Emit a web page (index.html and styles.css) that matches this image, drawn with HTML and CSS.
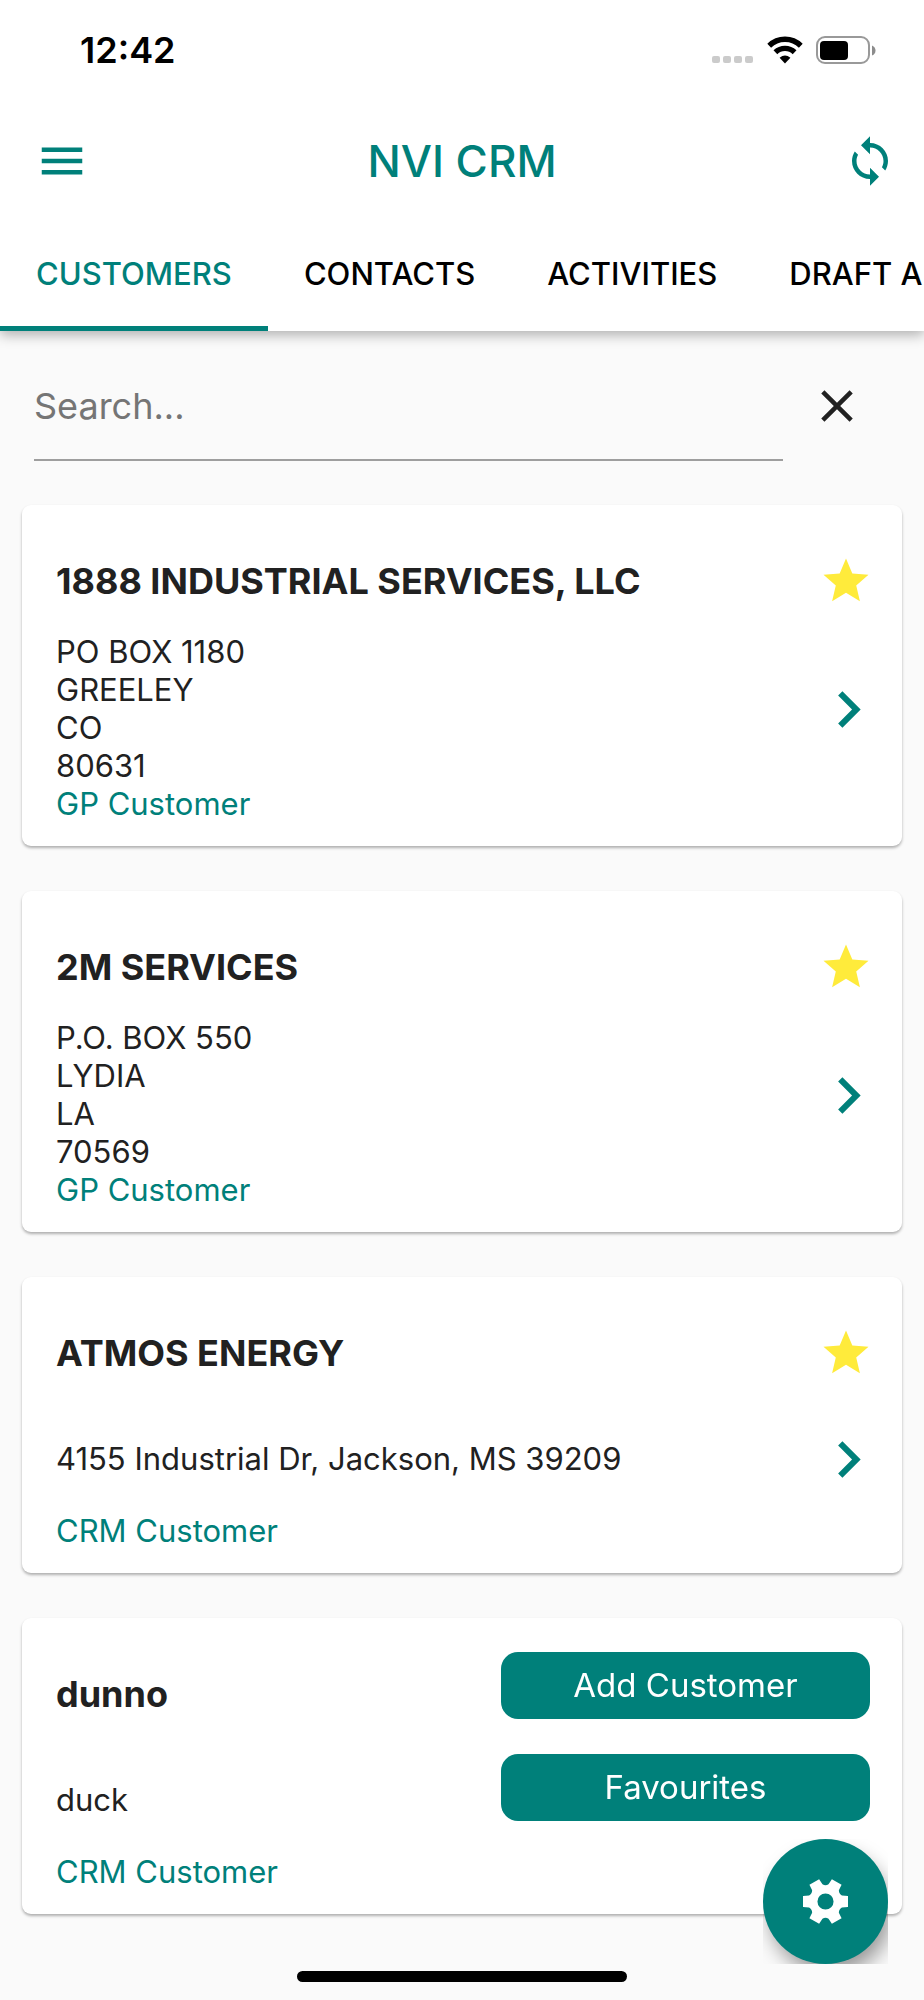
FILE: index.html
```html
<!DOCTYPE html>
<html lang="en">
<head>
<meta charset="utf-8">
<meta name="viewport" content="width=device-width, initial-scale=1">
<title>NVI CRM</title>
<link rel="stylesheet" href="styles.css">
</head>
<body>
<svg class="sprite" aria-hidden="true">
  <symbol id="star" viewBox="0 0 24 24"><path d="M12 17.27L18.18 21l-1.64-7.03L22 9.24l-7.19-.61L12 2 9.19 8.63 2 9.24l5.46 4.73L5.82 21z"/></symbol>
  <symbol id="chevron" viewBox="0 0 24 24"><path d="M10 6L8.59 7.41 13.17 12l-4.58 4.59L10 18l6-6z"/></symbol>
</svg>

<header class="header">
  <div class="status">
    <span class="status-time">12:42</span>
    <div class="status-icons">
      <svg class="signal" width="42" height="28" viewBox="0 0 42 28" aria-hidden="true">
        <rect x="0" y="20" width="8" height="7" rx="2"/><rect x="11" y="20" width="8" height="7" rx="2"/><rect x="22" y="20" width="8" height="7" rx="2"/><rect x="33" y="20" width="8" height="7" rx="2"/>
      </svg>
      <svg width="36" height="28" viewBox="0 0 36 28" aria-hidden="true">
        <g fill="none" stroke="#000" stroke-width="5.4">
          <path d="M2.2 9.700A22.600 22.600 0 0 1 33.800 9.700"/>
          <path d="M8.400 16.300A13.800 13.800 0 0 1 27.600 16.300"/>
        </g>
        <path d="M18 27.400L12.600 21.800Q18 17 23.400 21.800Z"/>
      </svg>
      <svg width="60" height="28" viewBox="0 0 60 28" aria-hidden="true">
        <rect x="1" y="1" width="52" height="26" rx="8" fill="none" stroke="#999" stroke-width="2"/>
        <rect x="4" y="5" width="28" height="19" rx="4"/>
        <path d="M56 9.500q3.500 1.500 3.500 5t-3.500 5z" fill="#8c8c8c"/>
      </svg>
    </div>
  </div>

  <div class="appbar">
    <button class="icon-button menu" type="button" aria-label="Menu">
      <svg class="icon" viewBox="0 0 24 24"><path d="M3 18h18v-2H3v2zm0-5h18v-2H3v2zm0-7v2h18V6H3z"/></svg>
    </button>
    <h1 class="title">NVI CRM</h1>
    <button class="icon-button sync" type="button" aria-label="Sync">
      <svg class="icon" viewBox="0 0 24 24"><path d="M12 4V1L8 5l4 4V6c3.310 0 6 2.690 6 6 0 1.010-.25 1.970-.7 2.800l1.460 1.460C19.540 15.030 20 13.570 20 12c0-4.420-3.580-8-8-8zm0 14c-3.310 0-6-2.690-6-6 0-1.010.25-1.970.7-2.800L5.240 7.740C4.460 8.970 4 10.430 4 12c0 4.420 3.580 8 8 8v3l4-4-4-4v3z"/></svg>
    </button>
  </div>

  <nav class="tabs">
    <a class="tab tab-active" href="#customers" aria-current="page">CUSTOMERS</a>
    <a class="tab" href="#contacts">CONTACTS</a>
    <a class="tab" href="#activities">ACTIVITIES</a>
    <a class="tab" href="#drafts">DRAFT A</a>
  </nav>
</header>

<main class="content">
  <form class="search">
    <input class="search-input" type="text" placeholder="Search..." aria-label="Search">
    <button class="icon-button search-clear" type="reset" aria-label="Clear search">
      <svg class="icon" viewBox="0 0 24 24"><path d="M19 6.410L17.590 5 12 10.590 6.410 5 5 6.410 10.590 12 5 17.590 6.410 19 12 13.410 17.590 19 19 17.590 13.410 12z"/></svg>
    </button>
  </form>

  <article class="card">
    <div class="card-head">
      <h2 class="card-title">1888 INDUSTRIAL SERVICES, LLC</h2>
      <button class="icon-button star" type="button" aria-label="Favourite"><svg class="icon"><use href="#star"/></svg></button>
    </div>
    <div class="card-row">
      <address class="address">PO BOX 1180<br>GREELEY<br>CO<br>80631</address>
      <a class="open" href="#customer-1" aria-label="Open customer"><svg class="chevron"><use href="#chevron"/></svg></a>
    </div>
    <p class="kind">GP Customer</p>
  </article>

  <article class="card">
    <div class="card-head">
      <h2 class="card-title">2M SERVICES</h2>
      <button class="icon-button star" type="button" aria-label="Favourite"><svg class="icon"><use href="#star"/></svg></button>
    </div>
    <div class="card-row">
      <address class="address">P.O. BOX 550<br>LYDIA<br>LA<br>70569</address>
      <a class="open" href="#customer-2" aria-label="Open customer"><svg class="chevron"><use href="#chevron"/></svg></a>
    </div>
    <p class="kind">GP Customer</p>
  </article>

  <article class="card">
    <div class="card-head">
      <h2 class="card-title">ATMOS ENERGY</h2>
      <button class="icon-button star" type="button" aria-label="Favourite"><svg class="icon"><use href="#star"/></svg></button>
    </div>
    <div class="card-row card-row-spaced">
      <address class="address">4155 Industrial Dr, Jackson, MS 39209</address>
      <a class="open" href="#customer-3" aria-label="Open customer"><svg class="chevron"><use href="#chevron"/></svg></a>
    </div>
    <p class="kind">CRM Customer</p>
  </article>

  <article class="card">
    <div class="card-head">
      <h2 class="card-title">dunno</h2>
    </div>
    <div class="card-row card-row-spaced">
      <address class="address">duck</address>
    </div>
    <p class="kind">CRM Customer</p>
  </article>
</main>

<div class="actions">
  <button class="action" type="button">Add Customer</button>
  <button class="action" type="button">Favourites</button>
  <div class="fab-box">
    <button class="fab" type="button" aria-label="Settings">
      <svg class="gear" viewBox="-70 -70 140 140"><path fill-rule="evenodd" d="M48.900-17.800L67-16.700V16.700L48.900 17.800Q39.800 23 39.800 33.400L47.900 49.600 19 66.300 9 51.200Q0 46-9 51.200L-19 66.300-47.900 49.600-39.800 33.400Q-39.800 23-48.900 17.800L-67 16.700V-16.700L-48.900-17.800Q-39.800-23-39.800-33.400L-47.900-49.600-19-66.300-9-51.200Q0-46 9-51.200L19-66.300 47.900-49.600 39.800-33.400Q39.800-23 48.900-17.800ZM24 0A24 24 0 1 0-24 0A24 24 0 1 0 24 0Z"/></svg>
    </button>
  </div>
</div>
<div class="home-indicator"></div>
</body>
</html>
```
FILE: styles.css
```css
:root {
  --teal: #00807a;
  --ink: #212121;
  --page: #fafafa;
}

* {
  box-sizing: border-box;
}

body {
  margin: 0;
  min-height: 100vh;
  background: var(--page);
  color: var(--ink);
  font: 400 31px/38px Inter, "Liberation Sans", sans-serif;
}

h1, h2, p {
  margin: 0;
}

button {
  border: 0;
  padding: 0;
  background: none;
  color: inherit;
  font: inherit;
  cursor: pointer;
}

a {
  color: inherit;
  text-decoration: none;
}

svg {
  display: block;
  fill: currentColor;
}

.sprite {
  position: absolute;
  width: 0;
  height: 0;
}

.header {
  position: sticky;
  top: 0;
  z-index: 1;
  background: #fff;
  box-shadow: 0 4px 12px rgba(0, 0, 0, 0.3);
}

.status {
  display: flex;
  align-items: center;
  justify-content: space-between;
  height: 98px;
  padding: 2px 48px 0 80px;
  color: #000;
}

.status-time {
  font-size: 36px;
  font-weight: 600;
}

.status-icons {
  display: flex;
  gap: 13px;
}

.signal {
  color: #cbcbcb;
}

.appbar {
  display: grid;
  grid-template-columns: 1fr auto 1fr;
  align-items: center;
  justify-items: start;
  height: 126px;
  padding: 0 27px;
  color: var(--teal);
}

.menu {
  margin-left: 8px;
}

.sync {
  justify-self: end;
}

.icon {
  width: 54px;
  height: 54px;
}

.title {
  font-size: 44px;
  font-weight: 500;
  line-height: 54px;
}

.tabs {
  display: flex;
  height: 107px;
  overflow: hidden;
  color: #000;
}

.tab {
  flex: none;
  padding: 31px 36px 0;
  border-bottom: 5px solid transparent;
  font-weight: 500;
  white-space: nowrap;
}

.tab-active {
  border-bottom-color: var(--teal);
  color: var(--teal);
}

.content {
  padding: 24px 22px 84px;
}

.search {
  display: flex;
  align-items: flex-start;
  gap: 27px;
  padding: 0 38px 0 12px;
}

.search-input {
  flex: 1;
  min-width: 0;
  height: 106px;
  padding: 0 0 3px;
  border: 0;
  border-bottom: 2px solid #9e9e9e;
  border-radius: 0;
  background: none;
  color: inherit;
  font: inherit;
  font-size: 36px;
  outline: none;
}

.search-input::placeholder {
  color: #757575;
  opacity: 1;
}

.search-clear {
  padding: 24px 0;
}

.card {
  margin-top: 45px;
  padding: 49px 17px 23px 34px;
  border-radius: 9px;
  background: #fff;
  box-shadow: 0 2px 3px rgba(0, 0, 0, 0.3);
}

.search + .card {
  margin-top: 44px;
}

.card-head {
  display: flex;
  align-items: center;
  justify-content: space-between;
  height: 54px;
  margin-bottom: 25px;
  padding-right: 12px;
}

.card-title {
  font-size: 36px;
  font-weight: 700;
}

.star {
  color: #ffeb3b;
}

.card-row {
  display: flex;
  align-items: center;
  justify-content: space-between;
}

.card-row-spaced {
  margin: 60px 0 34px;
  height: 38px;
}

.address {
  font-style: normal;
}

.open,
.kind {
  color: var(--teal);
}

.chevron {
  width: 73px;
  height: 73px;
}

.actions {
  position: fixed;
  right: 36px;
  bottom: 36px;
  z-index: 2;
  display: flex;
  flex-direction: column;
  align-items: flex-end;
}

.action {
  width: 369px;
  height: 67px;
  margin: 0 18px 35px 0;
  padding-bottom: 2px;
  border-radius: 17px;
  background: var(--teal);
  color: #fff;
  font-size: 33px;
}

.action + .action {
  margin-bottom: 18px;
}

/* The box trims the round button's shadow to a square. */
.fab-box {
  overflow: hidden;
}

.fab {
  display: grid;
  place-items: center;
  width: 125px;
  height: 125px;
  border-radius: 50%;
  background: var(--teal);
  color: #fff;
  box-shadow: 5px 12px 20px -2px rgba(0, 0, 0, 0.4);
}

.gear {
  width: 47px;
  height: 47px;
}

.home-indicator {
  position: fixed;
  bottom: 18px;
  left: 50%;
  z-index: 2;
  width: 330px;
  height: 11px;
  border-radius: 6px;
  background: #000;
  transform: translateX(-50%);
}
```
